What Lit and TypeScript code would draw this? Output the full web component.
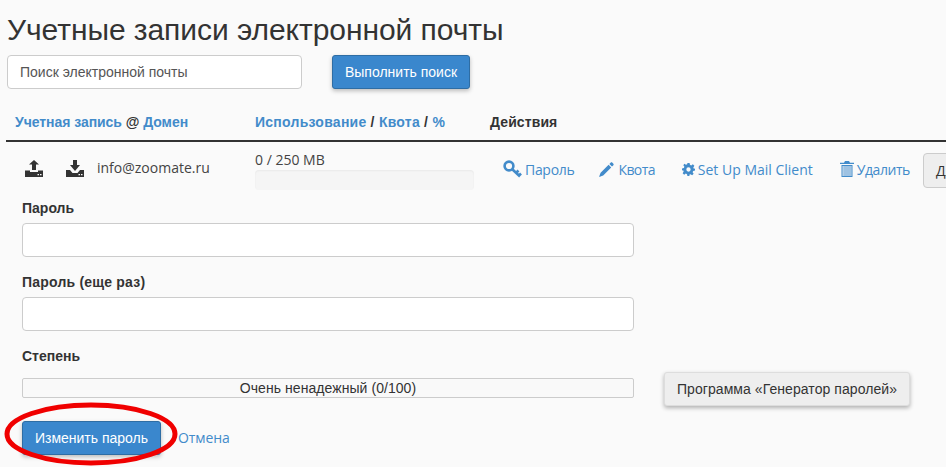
import { LitElement, html, css, svg } from "lit";
import { customElement } from "lit/decorators.js";

const uploadIcon = svg`<path d="M7 10V4.500H4L9 0l5 4.500h-3V10z"/><path d="M0 10.500h5V12h8v-1.500h5V17H0z"/><path fill="#fafafa" d="M12.500 14h1.500v1.200h-1.500zM15 14h1.500v1.200H15z"/>`;
const downloadIcon = svg`<path d="M7 0h4v5h3l-5 6-5-6h3z"/><path d="M0 10h4l2.500 3h5L14 10h4v7H0z"/><path fill="#fafafa" d="M12.500 14h1.500v1.200h-1.500zM15 14h1.500v1.200H15z"/>`;

@customElement("app-root")
export class AppRoot extends LitElement {
  static styles = css`
    :host {
      display: block;
      width: 946px;
      height: 467px;
      overflow: hidden;
      position: relative;
      background: #fafafa;
      color: #333;
      font-family: "Open Sans", sans-serif;
      font-size: 14px;
    }
    a { color: #428bca; text-decoration: none; }
    h1 {
      margin: 0;
      padding: 12px 0 0 7px;
      font: 400 30px/36px "Liberation Sans", sans-serif;
      letter-spacing: -0.06px;
      color: #333;
    }
    .search { display: flex; gap: 30px; padding: 7px 0 0 7px; }
    .search-box {
      width: 295px; height: 34px; box-sizing: border-box;
      border: 1px solid #ccc; border-radius: 4px; background: #fff;
      padding: 0 12px; display: flex; align-items: center;
      font: 14px "Liberation Sans", sans-serif; color: #555;
    }
    .btn-primary {
      background: #3a87cd; border: 1px solid #2e6da4; border-radius: 3px;
      box-sizing: border-box; color: #fff; height: 34px;
      display: flex; align-items: center; justify-content: center;
      font: 14px "Liberation Sans", sans-serif;
      box-shadow: 0 2px 4px rgba(0,0,0,.25);
    }
    .search .btn-primary { width: 138px; }
    .thead {
      display: grid; grid-template-columns: 240px 235px 1fr;
      margin: 15px 0 0 6px; height: 36px; align-items: center;
      padding-left: 9px; border-bottom: 2px solid #333;
      font: 700 14px "Liberation Sans", sans-serif;
    }
    .col-usage { letter-spacing: 0.25px; }
    .col-acct { letter-spacing: -0.05px; }
    .col-act { letter-spacing: 0.1px; }
    .row { display: flex; height: 57px; }
    .icons { display: flex; flex: none; gap: 23px; margin: 18px 0 0 25px; width: 72px; }
    .icons svg { width: 18px; height: 17px; fill: #333; }
    .addr { flex: none; width: 158px; padding-top: 16px; font-size: 14px; line-height: 20px; color: #444; }
    .usage { flex: none; width: 219px; padding-top: 9px; font-size: 14px; line-height: 17px; color: #444; }
    .bar {
      width: 219px; height: 20px; margin-top: 2px; border-radius: 4px;
      background: #f5f5f5; box-shadow: inset 0 1px 2px rgba(0,0,0,.05);
    }
    .actions { display: flex; flex: none; padding: 9px 0 0 29px; align-items: flex-start; }
    .act {
      display: flex; align-items: center; height: 36px; gap: 3px;
      font-size: 14px; color: #428bca; white-space: nowrap;
    }
    .act svg { fill: #428bca; stroke: none; display: block; }
    .act.k { margin-right: 25px; letter-spacing: -0.3px; }
    .act.q { margin-right: 27px; gap: 4px; letter-spacing: -0.6px; }
    .act.s { margin-right: 27px; }
    .act.d { margin-right: 13px; letter-spacing: -0.45px; }
    .key-line { fill: none; stroke: #428bca; stroke-width: 2.6; }
    .more {
      width: 60px; height: 35px; box-sizing: border-box; flex: none; margin-top: 2px;
      border: 1px solid #ccc; border-radius: 4px; background: #eee;
      padding: 7px 12px; font-size: 14px; color: #333; white-space: nowrap;
    }
    form { padding: 0 0 0 22px; display: block; }
    label {
      display: block; font: 700 14px/18px "Liberation Sans", sans-serif;
      color: #333;
    }
    label.wide { letter-spacing: 0.2px; }
    .field { height: 34px; width: 612px; box-sizing: border-box; margin-top: 6px;
      background: #fff; border: 1px solid #ccc; border-radius: 4px; }
    .group2, .group3 { margin-top: 16px; }
    .strength-row { display: flex; align-items: flex-start; margin-top: 13px; gap: 30px; }
    .meter {
      width: 612px; height: 20px; box-sizing: border-box;
      border: 1px solid #ccc; border-radius: 2px; background: #f9f9f9;
      text-align: center; font: 14px/19px "Liberation Sans", sans-serif; letter-spacing: 0.06px; color: #333;
    }
    .gen {
      margin-top: -6px; width: 246px; height: 34px; box-sizing: border-box;
      display: flex; align-items: center; justify-content: center;
      background: #eee; border: 1px solid #ddd; border-radius: 3px;
      box-shadow: 0 2px 4px rgba(0,0,0,.3); color: #333;
      font: 14px "Liberation Sans", sans-serif; letter-spacing: 0.07px;
    }
    .submit { display: flex; align-items: center; margin-top: 15px; gap: 17px; }
    .submit .btn-primary { width: 139px; }
    .submit a { margin-bottom: 1px; letter-spacing: -0.1px; }
    .ellipse { position: absolute; left: 0; top: 400px; pointer-events: none; }
  `;

  render() {
    return html`
      <h1>Учетные записи электронной почты</h1>
      <div class="search">
        <div class="search-box">Поиск электронной почты</div>
        <div class="btn-primary">Выполнить поиск</div>
      </div>
      <div class="thead">
        <div class="col-acct"><a>Учетная запись</a> @ <a>Домен</a></div>
        <div class="col-usage"><a>Использование</a> / <a>Квота</a> / <a>%</a></div>
        <div class="col-act">Действия</div>
      </div>
      <div class="row">
        <div class="icons">
          <svg viewBox="0 0 18 17">${uploadIcon}</svg>
          <svg viewBox="0 0 18 17">${downloadIcon}</svg>
        </div>
        <div class="addr">info@zoomate.ru</div>
        <div class="usage">0 / 250 MB<div class="bar"></div></div>
        <div class="actions">
          <a class="act k"><svg width="19" height="18" viewBox="0 0 19 18"><circle class="key-line" cx="6" cy="6" r="4.400"/><path class="key-line" d="M9 9l8 7.500M13 13l2.500-2.500M16 15.500l2-2"/></svg>Пароль</a>
          <a class="act q"><svg width="15" height="15" viewBox="0 0 15 15"><path d="M11.800.6c.4-.4 1-.4 1.400 0l1.200 1.200c.4.4.4 1 0 1.400L13 4.600 10.400 2zM9.600 2.800l2.600 2.600-8 8L0 15l1.600-4.200z"/></svg>Квота</a>
          <a class="act s"><svg width="13" height="13" viewBox="0 0 24 24"><path fill-rule="evenodd" d="M10 0h4l.7 3.400 2.300 1 3-1.900 2.800 2.800-1.900 3 1 2.300L24 10v4l-3.400.7-1 2.300 1.900 3-2.800 2.800-3-1.900-2.300 1L14 24h-4l-.7-3.400-2.300-1-3 1.900-2.800-2.800 1.900-3-1-2.300L0 14v-4l3.400-.7 1-2.300-1.900-3L4.300 1.200l3 1.900 2.300-1zM12 8a4 4 0 1 0 0 8 4 4 0 0 0 0-8z"/></svg>Set Up Mail Client</a>
          <a class="act d"><svg width="14" height="16" viewBox="0 0 14 16"><path fill-rule="evenodd" d="M5 0h4l1 1.800h4v1.200H0V1.800h4zM1.500 4h11v12h-11zM2.600 5v10h1V5zm1.900 0v10h1V5zm2 0v10h1V5zm2 0v10h1V5zm2 0v10h.9V5z"/></svg>Удалить</a>
          <div class="more">Для</div>
        </div>
      </div>
      <form>
        <label>Пароль</label>
        <div class="field"></div>
        <div class="group2"><label class="wide">Пароль (еще раз)</label><div class="field"></div></div>
        <div class="group3"><label>Степень</label></div>
        <div class="strength-row">
          <div class="meter">Очень ненадежный (0/100)</div>
          <div class="gen">Программа «Генератор паролей»</div>
        </div>
        <div class="submit"><div class="btn-primary">Изменить пароль</div><a>Отмена</a></div>
      </form>
      <svg class="ellipse" width="190" height="67" viewBox="0 0 190 67">
        <ellipse cx="91" cy="34" rx="84" ry="29" fill="none" stroke="#f00000" stroke-width="5"/>
      </svg>
    `;
  }
}
